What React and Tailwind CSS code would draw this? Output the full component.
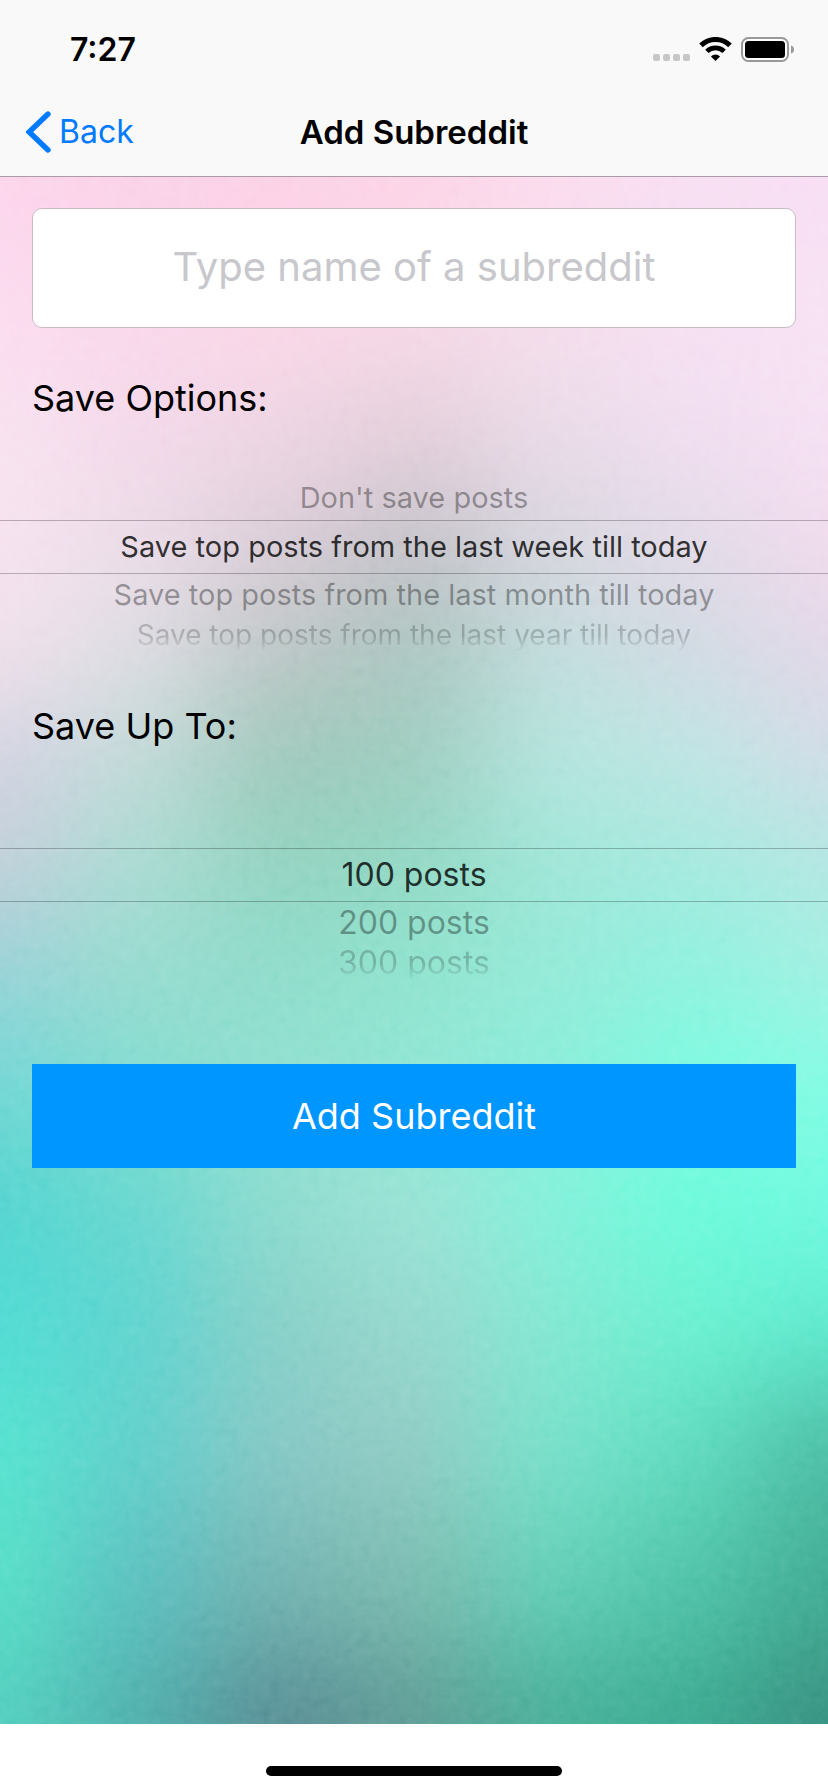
import { useId, useState } from "react";

const MESH_ROWS = [3, 143, 263, 383, 483, 583, 673, 783, 903, 1023, 1143, 1273, 1403, 1546];
const MESH_COLUMNS = [0, 138, 276, 414, 552, 690, 828];
const MESH_COLORS = [
  ["#fdd5ec", "#fbd2e9", "#fcd1e7", "#fdd4e7", "#fbdcee", "#f8dff3", "#f8def4"],
  ["#fbdcf0", "#fad8eb", "#fbd8e8", "#f8d9e7", "#f6deec", "#f6e0f3", "#f7e3f3"],
  ["#f9e3f0", "#f4d9ea", "#edd5e3", "#e2ceda", "#e9dbe8", "#f0def0", "#f5e0f3"],
  ["#f6e3f0", "#eadde8", "#d8ccd6", "#c0c0c6", "#d5d5dd", "#e0dae6", "#f0daec"],
  ["#f0e0ea", "#dcdde2", "#b9c5c3", "#a8c6bf", "#bfdedd", "#cfdae2", "#e0d8e8"],
  ["#d0d2e2", "#c2dad8", "#9ec8bc", "#9fcdc0", "#b6e6e0", "#bee6e4", "#d2dce8"],
  ["#c8cfda", "#acdcd4", "#94d2be", "#92d6c2", "#a0e6d8", "#a8e8de", "#b4e6e2"],
  ["#9cd2d8", "#9adcd0", "#8edccb", "#90e4ce", "#96ead8", "#90f2e0", "#a4f0e2"],
  ["#74d8d6", "#84dcd0", "#92e0d0", "#90e6d4", "#8aeeda", "#7cfce0", "#84fce4"],
  ["#54d4d0", "#68d8d0", "#8fdcd0", "#9ce4d6", "#84f2dc", "#6cfcdc", "#72fae0"],
  ["#50dcd4", "#60d4d0", "#88d0c8", "#98d8ce", "#84e8d2", "#6cf2d2", "#60ecd0"],
  ["#56e4d0", "#62d0cc", "#88c8c6", "#92ccc4", "#78e2cc", "#60dcc0", "#4cbca4"],
  ["#58e0c8", "#5cc0c0", "#74b4b2", "#7cbcb0", "#64d0b8", "#50c4a8", "#42ac94"],
  ["#54d0c0", "#50b0ac", "#588c94", "#609c96", "#48b098", "#3caa92", "#389080"],
];

function span(stops, index) {
  const start = index === 0 ? -200 : (stops[index - 1] + stops[index]) / 2;
  const end = index === stops.length - 1 ? stops[index] + 200 : (stops[index] + stops[index + 1]) / 2;
  return [start, end - start];
}

function Backdrop() {
  return (
    <svg
      className="absolute inset-0 -z-10 h-full w-full"
      viewBox="0 0 828 1546"
      preserveAspectRatio="none"
      aria-hidden="true"
    >
      <defs>
        <filter id="soften" filterUnits="userSpaceOnUse" x="-200" y="-200" width="1228" height="1946" colorInterpolationFilters="sRGB">
          <feGaussianBlur stdDeviation="52" />
        </filter>
        <filter id="paper" x="0" y="0" width="100%" height="100%" colorInterpolationFilters="sRGB">
          <feTurbulence type="fractalNoise" baseFrequency="0.1" numOctaves="3" seed="4" />
          <feColorMatrix values="0.5 0.5 0 0 0.1  0.5 0.5 0 0 0.1  0.5 0.5 0 0 0.1  0 0 0 0 1" />
        </filter>
      </defs>
      <g filter="url(#soften)">
        {MESH_COLORS.map((colors, row) =>
          colors.map((color, column) => {
            const [x, width] = span(MESH_COLUMNS, column);
            const [y, height] = span(MESH_ROWS, row);
            return (
              <rect key={`${row}-${column}`} x={x} y={y} width={width + 1} height={height + 1} fill={color} />
            );
          })
        )}
      </g>
      <rect width="828" height="1546" filter="url(#paper)" opacity="0.18" className="mix-blend-soft-light" />
    </svg>
  );
}

function StatusBar() {
  return (
    <div className="flex h-[88px] items-center justify-between pt-[11px] pr-[33px] pl-[70px]">
      <time className="text-[32px] leading-10 font-semibold">7:27</time>
      <div className="flex items-end">
        <svg className="mr-[9px] h-[25px] w-[37px]" viewBox="0 0 37 25" fill="#c7c7c7" aria-hidden="true">
          <rect x="0" y="17" width="7" height="7" rx="2" />
          <rect x="10" y="17" width="7" height="7" rx="2" />
          <rect x="20" y="17" width="7" height="7" rx="2" />
          <rect x="30" y="17" width="7" height="7" rx="2" />
        </svg>
        <svg className="mr-[9px] h-[25px] w-[33px]" viewBox="0 0 33 25" aria-label="Wi-Fi">
          <path d="M2 8.4 A20.6 20.6 0 0 1 31 8.4" fill="none" stroke="#000" strokeWidth="5" />
          <path d="M7.9 14.4 A12.3 12.3 0 0 1 25.1 14.4" fill="none" stroke="#000" strokeWidth="4.8" />
          <path d="M16.5 24 L11.9 19.4 A6.6 6.6 0 0 1 21.1 19.4 Z" />
        </svg>
        <svg className="h-[25px] w-[54px]" viewBox="0 0 54 25" aria-label="Battery full">
          <rect x="1" y="1" width="46" height="23" rx="6.5" fill="#fff" stroke="#999" strokeWidth="2" />
          <rect x="4" y="4" width="40" height="17" rx="3.5" />
          <path d="M50 8.5 C52 9 53 10.5 53 12.5 C53 14.5 52 16 50 16.5 Z" fill="#999" />
        </svg>
      </div>
    </div>
  );
}

function NavBar() {
  return (
    <nav className="grid h-[88px] grid-cols-[1fr_auto_1fr] items-center px-[26px]">
      <a href="#back" className="flex items-center gap-2 text-[32px] leading-10 text-[#007aff]">
        <svg className="h-[42px] w-[25px]" viewBox="0 0 25 42" fill="none" aria-hidden="true">
          <path d="M22 3 L3.2 21 L22 39" stroke="currentColor" strokeWidth="5.4" strokeLinecap="round" strokeLinejoin="miter" />
        </svg>
        Back
      </a>
      <h1 className="text-[33px] leading-10 font-semibold">Add Subreddit</h1>
    </nav>
  );
}

const ROW_STYLES = {
  "-1": "h-[44px] text-black/35",
  0: "h-[54px] border-y border-black/25 text-black/80",
  1: "h-[42px] text-black/35",
  2: "h-[38px] text-black/20 mask-b-from-50% mask-b-to-95%",
};

function Picker({ label, options, initial, textClass, farTextClass }) {
  const name = useId();
  const [selected, setSelected] = useState(initial);
  return (
    <fieldset>
      <legend className="px-8 text-[36px] leading-[48px]">{label}</legend>
      <div className="flex flex-col pt-[54px]">
        {selected === 0 && <div className="h-[44px]" />}
        {options.map((option, index) => {
          const offset = index - selected;
          if (offset < -1 || offset > 2) return null;
          return (
            <label
              key={option}
              className={`flex cursor-pointer items-center justify-center whitespace-nowrap ${ROW_STYLES[offset]} ${offset === 2 ? farTextClass : textClass}`}
            >
              <input
                type="radio"
                name={name}
                className="sr-only"
                checked={offset === 0}
                onChange={() => setSelected(index)}
              />
              {option}
            </label>
          );
        })}
      </div>
    </fieldset>
  );
}

export default function App() {
  return (
    <div className="flex min-h-screen flex-col bg-white font-['Inter','Liberation_Sans',sans-serif] text-black">
      <header className="border-b border-[#ab9ba6] bg-[#f9f9f9]">
        <StatusBar />
        <NavBar />
      </header>
      <main className="relative isolate flex-1 overflow-hidden">
        <Backdrop />
        <form className="flex flex-col pt-[31px]" onSubmit={(event) => event.preventDefault()}>
          <input
            type="text"
            aria-label="Subreddit name"
            placeholder="Type name of a subreddit"
            className="mx-8 h-[120px] rounded-[10px] border border-[#c6bcc4] bg-white pb-1 text-center text-[40px] placeholder:text-[#c7c7cc]"
          />
          <div className="mt-[46px] flex flex-col gap-12">
            <Picker
              label="Save Options:"
              initial={1}
              options={[
                "Don't save posts",
                "Save top posts from the last week till today",
                "Save top posts from the last month till today",
                "Save top posts from the last year till today",
              ]}
              textClass="text-[29px]"
              farTextClass="text-[28px]"
            />
            <Picker
              label="Save Up To:"
              initial={0}
              options={["100 posts", "200 posts", "300 posts", "400 posts", "500 posts"]}
              textClass="text-[32px]"
              farTextClass="text-[32px]"
            />
          </div>
          <button type="submit" className="mx-8 mt-[82px] h-[104px] cursor-pointer bg-[#0096ff] text-[36px] text-white">
            Add Subreddit
          </button>
        </form>
      </main>
      <footer className="flex h-[68px] items-end justify-center pb-4">
        <div className="h-[10px] w-[296px] rounded-full bg-black" />
      </footer>
    </div>
  );
}
